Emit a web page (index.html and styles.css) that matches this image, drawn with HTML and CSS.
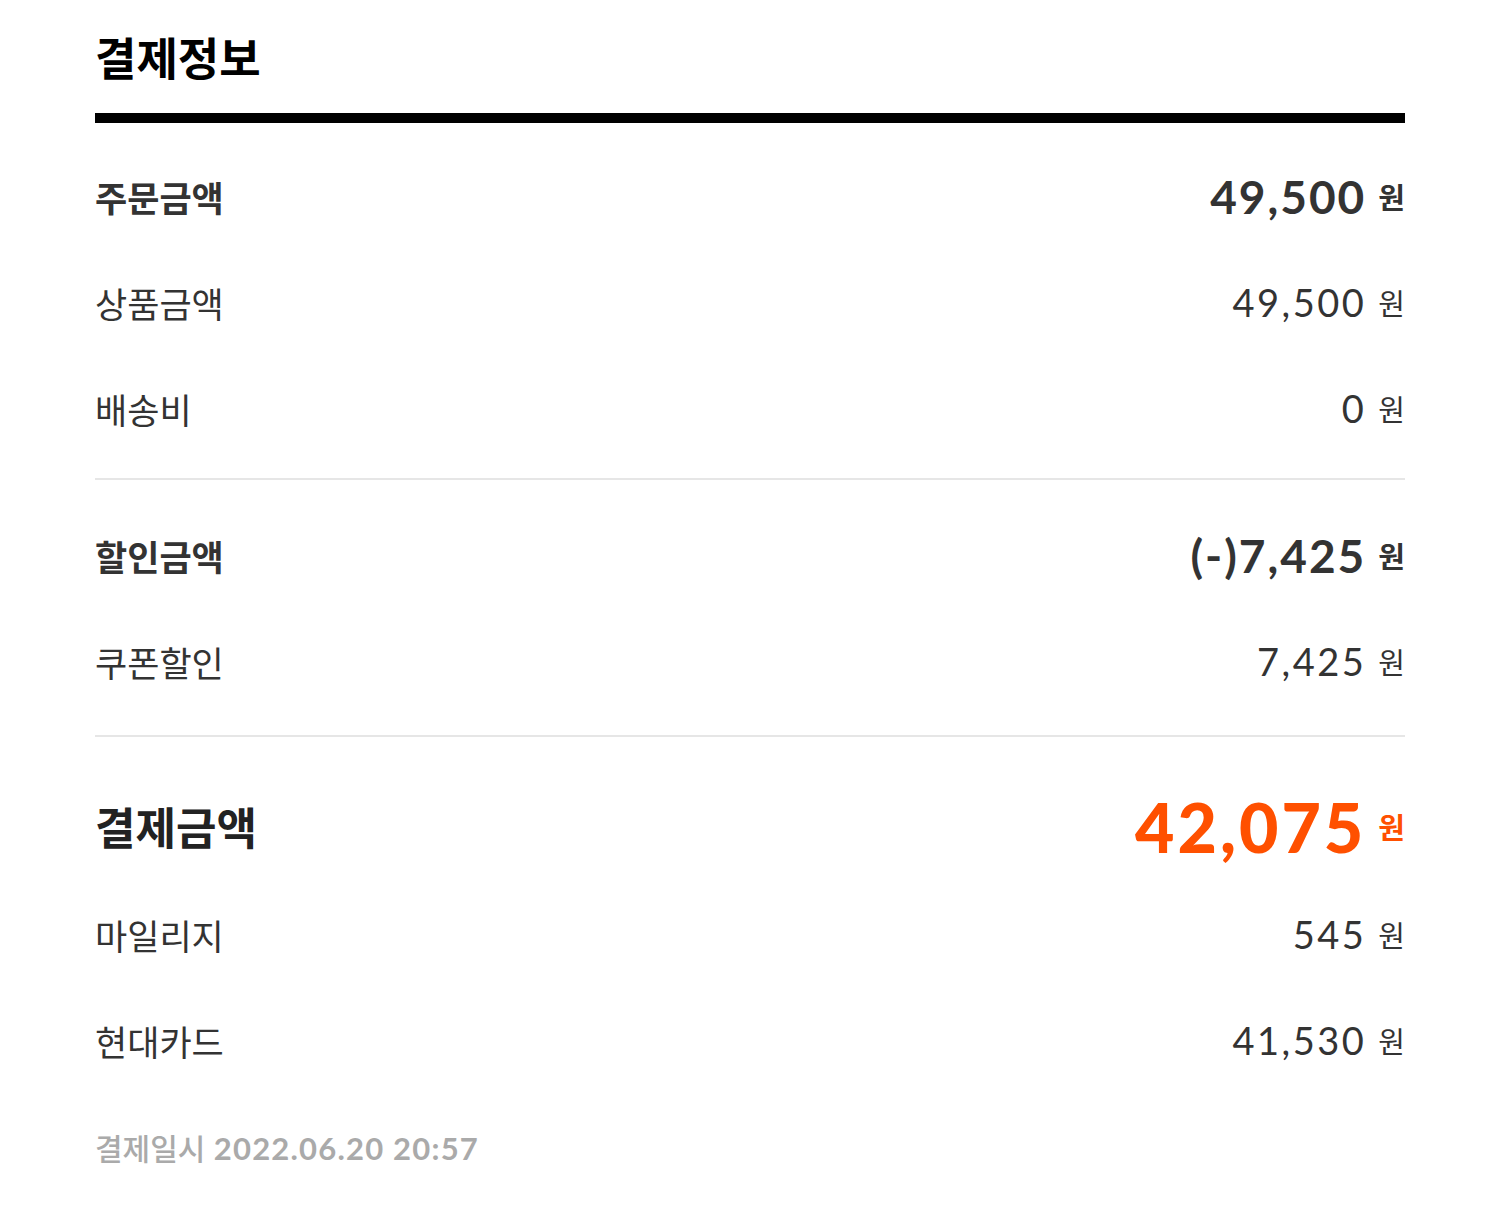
FILE: index.html
```html
<!DOCTYPE html>
<html lang="ko">
  <head>
    <meta charset="UTF-8" />
    <title>결제정보</title>
    <link rel="stylesheet" href="styles.css">
  </head>
  <body>
    <div class="pay-info">
      <h1>결제정보</h1>

      <!-- 주문금액 -->
      <div class="section first">
        <div class="row total">
          <span class="label">주문금액</span>
          <span class="price"><b>49,500</b>원</span>
        </div>
        <div class="row">
          <span class="label">상품금액</span>
          <span class="price"><b>49,500</b>원</span>
        </div>
        <div class="row">
          <span class="label">배송비</span>
          <span class="price"><b>0</b>원</span>
        </div>
      </div>

      <!-- 할인금액 -->
      <div class="section">
        <div class="row total">
          <span class="label">할인금액</span>
          <span class="price"><b>(-)7,425</b>원</span>
        </div>
        <div class="row">
          <span class="label">쿠폰할인</span>
          <span class="price"><b>7,425</b>원</span>
        </div>
      </div>

      <!-- 결제금액 -->
      <div class="section last">
        <div class="row grand">
          <span class="label">결제금액</span>
          <span class="price"><b>42,075</b>원</span>
        </div>
        <div class="row">
          <span class="label">마일리지</span>
          <span class="price"><b>545</b>원</span>
        </div>
        <div class="row">
          <span class="label">현대카드</span>
          <span class="price"><b>41,530</b>원</span>
        </div>
      </div>

      <p class="paid-at">결제일시 <span class="num">2022.06.20 20:57</span></p>
    </div>
  </body>
</html>
```

FILE: styles.css
```css
* {
  margin: 0;
  padding: 0;
  box-sizing: border-box;
}

body {
  background: #fff;
  color: #333;
  font-family: "Noto Sans CJK KR", "Noto Sans", sans-serif;
}

.pay-info {
  padding: 21px 83px 0 95px;
}

h1 {
  font-size: 45px;
  font-weight: 700;
  color: #000;
  line-height: 72px;
  padding-bottom: 20px;
  border-bottom: 10px solid #000;
}

.section {
  padding: 20px 0 17px;
  border-bottom: 2px solid #e6e6e6;
}

.section + .section {
  padding: 22px 0 21px;
}

.section.last {
  border-bottom: none;
  padding: 34px 0 0;
}

.row {
  display: flex;
  justify-content: space-between;
  align-items: center;
  height: 106px;
}

.label {
  font-size: 35px;
  font-weight: 400;
  color: #333;
}

.price {
  display: flex;
  align-items: center;
  font-size: 29px;
  color: #333;
}

.price b {
  font-family: "Lato", "Noto Sans", sans-serif;
  font-weight: 400;
  font-size: 38px;
  letter-spacing: 2.5px;
  margin-right: 12px;
}

.row.total .label {
  font-weight: 700;
}

.row.total .price {
  font-weight: 700;
}

.row.total .price b {
  font-weight: 700;
  font-size: 46px;
  letter-spacing: 2px;
}

.row.grand {
  height: 110px;
}

.row.grand .label {
  font-size: 44px;
  font-weight: 700;
  color: #222;
}

.row.grand .price {
  color: #ff5000;
  font-weight: 700;
}

.row.grand .price b {
  font-weight: 900;
  font-size: 68px;
  letter-spacing: 3px;
}

.paid-at {
  margin-top: 32px;
  font-size: 30px;
  font-weight: 500;
  color: #aaa;
}

.paid-at .num {
  font-family: "Lato", "Noto Sans", sans-serif;
  font-size: 31px;
  font-weight: 700;
  letter-spacing: 1.2px;
}
```
